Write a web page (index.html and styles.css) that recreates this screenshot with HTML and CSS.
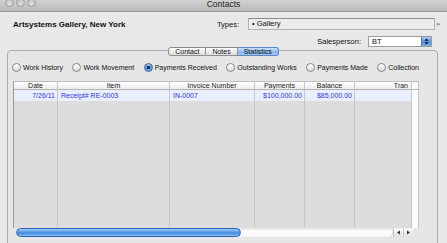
FILE: index.html
```html
<!DOCTYPE html>
<html lang="en">
<head>
  <meta charset="UTF-8">
  <title>Contacts</title>
  <link rel="stylesheet" href="styles.css">
</head>
<body>
  <div class="window">
    <div class="titlebar">
      <div class="lights"><span></span><span></span><span></span></div>
      <div class="title">Contacts</div>
    </div>

    <div class="top">
      <div class="name">Artsystems Gallery, New York</div>
      <span class="lbl">Types:</span>
      <div class="field">• Gallery</div>
      <span class="more">▸</span>
    </div>

    <div class="sales">
      <span class="lbl">Salesperson:</span>
      <div class="select">
        <span class="val">BT</span>
        <span class="btn">
          <svg width="5" height="7" viewBox="0 0 5 7"><path d="M2.5 0.5L4.5 2.8H0.5Z M2.5 6.5L4.5 4.2H0.5Z" fill="#111"/></svg>
        </span>
      </div>
    </div>

    <div class="tabs">
      <span class="tab first">Contact</span>
      <span class="tab">Notes</span>
      <span class="tab on last">Statistics</span>
    </div>

    <div class="panel">
      <div class="radios">
        <label class="radio"><i></i>Work History</label>
        <label class="radio"><i></i>Work Movement</label>
        <label class="radio checked"><i></i>Payments Received</label>
        <label class="radio"><i></i>Outstanding Works</label>
        <label class="radio"><i></i>Payments Made</label>
        <label class="radio"><i></i>Collection</label>
      </div>

      <div class="table">
        <div class="th">Date</div>
        <div class="th">Item</div>
        <div class="th">Invoice Number</div>
        <div class="th">Payments</div>
        <div class="th">Balance</div>
        <div class="th right">Tran</div>
        <div class="corner"></div>

        <div class="td right">7/26/11</div>
        <div class="td">Receipt# RE-0003</div>
        <div class="td">IN-0007</div>
        <div class="td right">$100,000.00</div>
        <div class="td right">$85,000.00</div>
        <div class="td"></div>
        <div class="vscroll"></div>

        <div class="fill"></div>
        <div class="fill"></div>
        <div class="fill"></div>
        <div class="fill"></div>
        <div class="fill"></div>
        <div class="fill"></div>
      </div>

      <div class="hscroll">
        <div class="track"><div class="thumb"></div></div>
        <div class="arrows">
          <span><svg width="5" height="5" viewBox="0 0 5 5"><path d="M1 2.5L4 0.5V4.5Z" fill="#333"/></svg></span>
          <span><svg width="5" height="5" viewBox="0 0 5 5"><path d="M4 2.5L1 0.5V4.5Z" fill="#333"/></svg></span>
        </div>
      </div>
    </div>
  </div>
</body>
</html>
```

FILE: styles.css
```css
body {
  margin: 0;
  height: 243px;
  overflow: hidden;
  background: #e8e8e8;
  font-family: "Liberation Sans", Arial, sans-serif;
  color: #111;
}

.window {
  width: 447px;
  height: 252px;
  display: flex;
  flex-direction: column;
}

/* title bar */
.titlebar {
  height: 11px;
  border-bottom: 1px solid #979797;
  background: linear-gradient(#d2d2d2, #bababa);
  display: grid;
  grid-template-columns: 1fr auto 1fr;
  overflow: hidden;
}

.lights {
  display: flex;
  gap: 2px;
  padding-left: 5px;
  margin-top: -2px;
}

.lights span {
  width: 7px;
  height: 7px;
  border-radius: 50%;
  border: 1px solid #9c9c9c;
  background: radial-gradient(circle at 50% 70%, #e2e2e2, #b4b4b4);
}

.title {
  font-size: 8.5px;
  line-height: 9px;
  color: #262626;
}

/* header rows */
.top {
  display: flex;
  align-items: center;
  height: 12px;
  margin-top: 6px;
  padding: 0 2px 0 13px;
}

.name {
  flex: 1;
  font-weight: bold;
  font-size: 8px;
}

.lbl {
  font-size: 7.5px;
}

.field {
  width: 187px;
  height: 12px;
  box-sizing: border-box;
  margin-left: 9px;
  padding-left: 3px;
  border: 1px solid #b2b2b2;
  border-top-color: #8e8e8e;
  background: #ececec;
  font-size: 7.5px;
  line-height: 10px;
}

.more {
  width: 8px;
  margin-left: 2px;
  font-size: 7px;
  color: #9a9a9a;
}

.sales {
  display: flex;
  justify-content: flex-end;
  align-items: center;
  margin-top: 6px;
  padding-right: 15px;
}

.select {
  display: flex;
  width: 64px;
  height: 11px;
  box-sizing: border-box;
  margin-left: 7px;
  border: 1px solid #9c9c9c;
  background: #fff;
}

.val {
  flex: 1;
  padding-left: 3px;
  font-size: 7.5px;
  line-height: 9px;
}

.btn {
  width: 9px;
  display: flex;
  align-items: center;
  justify-content: center;
  border-left: 1px solid #4a7cc0;
  background: linear-gradient(#a9cdf6, #4d8ee3 55%, #7cb4f1);
}

/* tabs */
.tabs {
  display: flex;
  justify-content: center;
  margin-bottom: -6px;
  position: relative;
  z-index: 1;
}

.tab {
  height: 7px;
  padding: 0 6px;
  border: 1px solid #8d8d8d;
  border-left: none;
  background: linear-gradient(#fdfdfd, #dedede);
  font-size: 7px;
  line-height: 7px;
}

.tab.first {
  border-left: 1px solid #8d8d8d;
  border-radius: 3px 0 0 3px;
}

.tab.last {
  border-radius: 0 3px 3px 0;
}

.tab.on {
  border-color: #5a86c4;
  background: linear-gradient(#cfe3fb, #86b8f0 60%, #a6cbf5);
}

/* panel */
.panel {
  flex: 1;
  margin: 0 9px 0 7px;
  padding: 12px 18px 0 5px;
  border: 1px solid #ababab;
  border-radius: 4px;
  background: #e6e6e6;
}

.radios {
  display: flex;
  justify-content: space-between;
  height: 9px;
  margin: 0 0 9px -1px;
}

.radio {
  display: flex;
  align-items: center;
  gap: 2px;
  font-size: 7px;
  line-height: 9px;
}

.radio i {
  width: 7px;
  height: 7px;
  border-radius: 50%;
  border: 1px solid #858585;
  background: linear-gradient(#ffffff, #dcdcdc);
}

.radio.checked i {
  border-color: #375f99;
  background: radial-gradient(circle, #1c2b47 0 1.5px, transparent 2px), linear-gradient(#a8cdf6, #4f90e2 60%, #86bbf2);
}

/* table */
.table {
  display: grid;
  grid-template-columns: 44px 112px 85px 50px 50px 57px 7px;
  grid-template-rows: 8px 11px 1fr;
  height: 147px;
  border-left: 1px solid #9a9a9a;
  border-top: 1px solid #bdbdbd;
  box-sizing: border-box;
  background: #dddddd;
}

.table > div {
  box-sizing: border-box;
  border-right: 1px solid #c6c6c6;
  overflow: hidden;
  white-space: nowrap;
}

.th {
  background: linear-gradient(#ffffff, #ececec);
  border-bottom: 1px solid #b4b4b4;
  font-size: 7px;
  line-height: 7px;
  text-align: center;
  color: #1c1c1c;
}

.th.right {
  text-align: right;
  padding-right: 3px;
}

.corner {
  background: #fafafa;
  border-bottom: 1px solid #b4b4b4;
}

.td {
  background: #e9effc;
  font-size: 7px;
  line-height: 11px;
  color: #3434e4;
  padding-left: 3px;
}

.td.right {
  text-align: right;
  padding: 0 2px 0 0;
}

.vscroll {
  grid-row: 2 / 4;
  grid-column: 7;
  background: #fcfcfc;
}

/* horizontal scroller */
.hscroll {
  display: flex;
  height: 9px;
  margin: 0 6px 0 3px;
}

.track {
  flex: 1;
  border-radius: 0 5px 5px 0;
  background: linear-gradient(#e4e4e4, #ffffff 40%, #f4f4f4);
}

.thumb {
  width: 225px;
  height: 9px;
  box-sizing: border-box;
  border: 1px solid #2b64b4;
  border-radius: 5px;
  background: linear-gradient(#a6cdf7, #4b92e6 50%, #3a82dc 55%, #8cc0f4);
}

.arrows {
  display: flex;
  margin-left: 1px;
}

.arrows span {
  width: 9px;
  display: flex;
  align-items: center;
  justify-content: center;
  border-left: 1px solid #c8c8c8;
  background: linear-gradient(#f8f8f8, #e2e2e2);
}
```
